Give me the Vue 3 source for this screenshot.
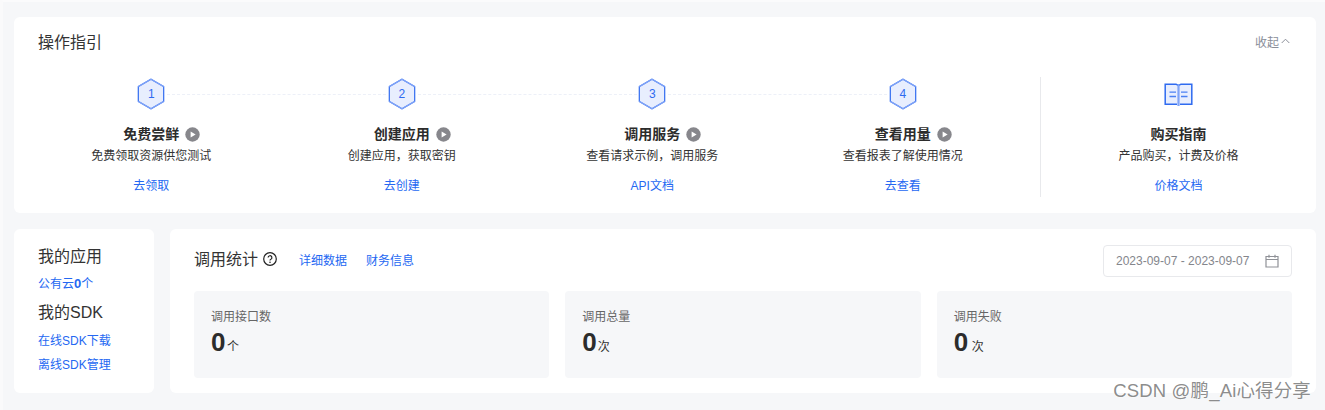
<script setup>
const steps = [
  { no: 1, title: '免费尝鲜', desc: '免费领取资源供您测试', link: '去领取' },
  { no: 2, title: '创建应用', desc: '创建应用，获取密钥', link: '去创建' },
  { no: 3, title: '调用服务', desc: '查看请求示例，调用服务', link: 'API文档' },
  { no: 4, title: '查看用量', desc: '查看报表了解使用情况', link: '去查看' },
]

const stats = [
  { label: '调用接口数', value: 0, unit: '个', gap: 1.5 },
  { label: '调用总量', value: 0, unit: '次', gap: 1 },
  { label: '调用失败', value: 0, unit: '次', gap: 3.5 },
]
</script>

<template>
  <div class="page">
    <section class="card guide">
      <header class="guide-head">
        <h2>操作指引</h2>
        <a class="fold">
          收起
          <svg width="9" height="6" viewBox="0 0 9 6"><path d="M.7 5 4.5 1.2 8.3 5" fill="none" stroke="#8a8e99" stroke-width="1" /></svg>
        </a>
      </header>
      <div class="guide-body">
        <div class="steps">
          <div v-for="(s, i) in steps" :key="s.no" class="step" :class="{ linked: i < steps.length - 1 }">
            <div class="hex">
              <svg width="28" height="32" viewBox="0 0 28 32">
                <path d="M14 1.2 26.7 8.6v14.8L14 30.8 1.3 23.4V8.6Z" fill="#e8eefe" stroke="#2f6bf0" stroke-width="1.2" />
                <path d="M1.3 8.6 14 1.2l12.7 7.4M1.3 23.4 14 30.8l12.7-7.4" fill="none" stroke="#7fa3f7" stroke-width="1.3" />
              </svg>
              <span>{{ s.no }}</span>
            </div>
            <div class="step-title">
              <span class="title-text">{{ s.title }}</span>
              <svg class="play" width="15" height="15" viewBox="0 0 15 15">
                <circle cx="7.5" cy="7.5" r="7.2" fill="#87878c" />
                <path d="M5.6 4.4 10.6 7.5 5.6 10.6Z" fill="#fff" />
              </svg>
            </div>
            <p class="step-desc">{{ s.desc }}</p>
            <a class="link">{{ s.link }}</a>
          </div>
        </div>
        <div class="buy step">
          <div class="hex">
            <svg width="29" height="27" viewBox="0 0 29 27">
              <path d="M1 3h11l2.500 1.500L17 3h11v20.500H17l-2.500 1.500-2.500-1.500H1Z" fill="#e8eefe" />
              <path d="M14.500 4.500 12 3.200H1.200v20.100H13M14.500 4.500 17 3.200h10.800v20.100H16" fill="none" stroke="#2f6bf0" stroke-width="1.500" />
              <path d="M14.500 3.500V25" stroke="#7fa3f7" stroke-width="2.200" />
              <path d="M5.500 11.200H12M5.500 15.500H12M17 11.200h6.500M17 15.500h6.500" stroke="#4a80f3" stroke-width="1.300" />
            </svg>
          </div>
          <div class="step-title"><span class="title-text">购买指南</span></div>
          <p class="step-desc">产品购买，计费及价格</p>
          <a class="link">价格文档</a>
        </div>
      </div>
    </section>

    <div class="bottom">
      <aside class="card mine">
        <h3>我的应用</h3>
        <a class="link cloud">公有云<b>0</b>个</a>
        <h3>我的SDK</h3>
        <a class="link sdk">在线SDK下载</a>
        <a class="link sdk">离线SDK管理</a>
      </aside>

      <section class="card usage">
        <header class="usage-head">
          <h3>调用统计</h3>
          <svg class="help" width="14" height="14" viewBox="0 0 14 14">
            <circle cx="7" cy="7" r="6.300" fill="none" stroke="#222" stroke-width="1.200" />
            <path d="M5.100 5.600a1.900 1.900 0 1 1 2.800 1.700c-.6.300-.9.600-.9 1.300" fill="none" stroke="#222" stroke-width="1.200" />
            <circle cx="7" cy="10.300" r=".8" fill="#222" />
          </svg>
          <a class="link detail">详细数据</a>
          <a class="link finance">财务信息</a>
          <div class="date">
            <span>2023-09-07 - 2023-09-07</span>
            <svg width="14" height="14" viewBox="0 0 14 14">
              <path d="M1 2.500h12v10.500H1ZM1 5.500h12M4 .8v3M10 .8v3" fill="none" stroke="#8f9197" stroke-width="1.200" />
            </svg>
          </div>
        </header>
        <div class="stats">
          <div v-for="st in stats" :key="st.label" class="stat">
            <div class="stat-label">{{ st.label }}</div>
            <div class="stat-value">
              <b>{{ st.value }}</b>
              <span :style="{ marginLeft: st.gap + 'px' }">{{ st.unit }}</span>
            </div>
          </div>
        </div>
      </section>
    </div>

    <div class="watermark">CSDN @鹏_Ai心得分享</div>
  </div>
</template>

<style>
html, body {
  margin: 0;
  background: #f6f7f9;
}
</style>

<style scoped>
.page {
  position: relative;
  box-sizing: border-box;
  width: 1325px;
  height: 410px;
  overflow: hidden;
  padding: 15px 9px 0 11px;
  border-top: 2px solid #fbfbfc;
  border-left: 3px solid #fafafb;
  background: #f6f7f9;
  font-family: "Liberation Sans", "Noto Sans CJK SC", sans-serif;
  color: #333;
}

h2, h3, p {
  margin: 0;
  font-weight: 400;
}

.card {
  background: #fff;
  border-radius: 6px;
}

.guide {
  height: 196px;
  padding: 0 12px;
  box-sizing: border-box;
}

.guide-head {
  display: flex;
  justify-content: space-between;
  align-items: center;
  height: 50px;
  padding: 0 14px 0 12px;
}

.guide-head h2 {
  padding-top: 2px;
  font-size: 16px;
  line-height: 48px;
}

.fold {
  display: flex;
  align-items: center;
  gap: 2px;
  margin-bottom: 2px;
  font-size: 12px;
  color: #8a8e99;
}

.guide-body {
  display: flex;
  height: 120px;
  margin-top: 10px;
}

.steps {
  display: grid;
  grid-template-columns: repeat(4, 250.5px);
  width: 1002px;
  margin-right: 12px;
}

.step {
  position: relative;
  display: flex;
  flex-direction: column;
  align-items: center;
}

.linked::after {
  content: "";
  position: absolute;
  top: 17px;
  left: 141px;
  width: 219px;
  border-top: 1px dashed #edf0f8;
}

.hex {
  position: relative;
  display: flex;
  justify-content: center;
  align-items: center;
  height: 32px;
  margin-top: 1px;
}

.hex span {
  position: absolute;
  font-size: 12px;
  color: #2f6bf0;
}

.step-title {
  position: relative;
  margin-top: 14px;
  height: 20px;
  line-height: 20px;
  font-size: 14px;
  font-weight: 700;
}

.title-text {
  color: #2c2c2c;
}

.play {
  position: absolute;
  top: 3px;
  left: 62px;
}

.step-desc {
  margin-top: 2px;
  font-size: 12px;
  line-height: 20px;
}

.link {
  color: #2468f2;
  font-size: 12px;
}

.step > .link {
  margin-top: 11px;
  line-height: 18px;
}

.buy {
  flex: 1;
  margin-right: -12px;
  border-left: 1px solid #e8e9ec;
}

.bottom {
  display: flex;
  gap: 16px;
  margin-top: 16px;
}

.mine {
  display: flex;
  flex-direction: column;
  box-sizing: border-box;
  width: 140px;
  height: 164px;
  padding: 17px 24px 0;
}

.mine h3 {
  font-size: 16px;
  line-height: 22px;
}

.mine h3 + .cloud {
  margin-top: 7px;
  margin-bottom: 9px;
  line-height: 18px;
}

.cloud b {
  font-size: 13px;
}

.sdk {
  line-height: 18px;
  margin-top: 6px;
}

.mine h3 + .sdk {
  margin-top: 8px;
}

.usage {
  flex: 1;
  height: 164px;
  box-sizing: border-box;
  padding: 16px 24px 0;
}

.usage-head {
  display: flex;
  align-items: center;
  height: 32px;
}

.usage-head h3 {
  margin-bottom: 6px;
  font-size: 16px;
}

.help {
  margin-left: 5px;
  margin-bottom: 4px;
}

.usage-head .link {
  margin-bottom: 4px;
}

.detail {
  margin-left: 22px;
}

.finance {
  margin-left: 19px;
}

.date {
  display: flex;
  align-items: center;
  justify-content: space-between;
  box-sizing: border-box;
  width: 189px;
  height: 32px;
  margin-left: auto;
  padding: 0 12px;
  border: 1px solid #e8e9ec;
  border-radius: 4px;
  font-size: 12px;
  color: #84868c;
}

.stats {
  display: grid;
  grid-template-columns: repeat(3, 1fr);
  gap: 16px;
  margin-top: 14px;
}

.stat {
  height: 87px;
  box-sizing: border-box;
  padding: 17px 17px 0;
  background: #f6f7f9;
  border-radius: 4px;
}

.stat-label {
  font-size: 12px;
  line-height: 18px;
  color: #666;
}

.stat-value {
  display: flex;
  align-items: baseline;
  margin-top: -1px;
  line-height: 34px;
}

.stat-value b {
  font-size: 26px;
  color: #2c2c2c;
}

.stat-value span {
  font-size: 12px;
}

.watermark {
  position: absolute;
  right: 14px;
  bottom: 7px;
  font-size: 18.500px;
  letter-spacing: 0.15px;
  line-height: 24px;
  color: rgba(110, 110, 110, 0.8);
  text-shadow: 0 0 2px #fff;
}
</style>
